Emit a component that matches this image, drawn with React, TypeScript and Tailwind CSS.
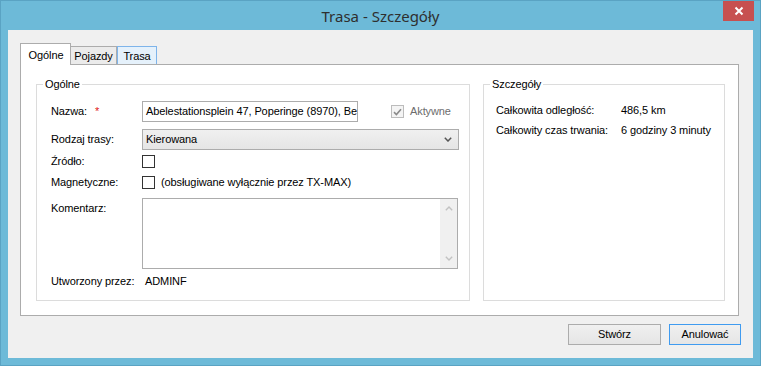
import React from "react";

const body = { fontFamily: '"Liberation Sans", Arial, sans-serif' };

function Check({ checked, disabled }: { checked?: boolean; disabled?: boolean }) {
  return (
    <div
      className={
        "w-[13px] h-[13px] border flex items-center justify-center " +
        (disabled ? "border-[#bcbcbc] bg-[#f4f4f4]" : "border-[#333333] bg-white")
      }
    >
      {checked && (
        <svg width="9" height="8" viewBox="0 0 9 8">
          <path d="M1 4.2 L3.4 6.5 L8 1.2" fill="none" stroke="#8a8a8a" strokeWidth="1.6" />
        </svg>
      )}
    </div>
  );
}

export default function App() {
  return (
    <div
      className="w-[761px] h-[366px] bg-[#6dbad8] border border-[#5aa3c3] flex flex-col text-[11px] text-black tracking-[-0.1px]"
      style={body}
    >
      {/* title bar */}
      <div className="relative h-[29px] flex items-center justify-center">
        <span
          className="text-[15px] text-[#2f2f2f] leading-none mt-[1px] tracking-normal"
          style={{ fontFamily: '"Noto Sans", "Open Sans", sans-serif' }}
        >
          Trasa - Szczegóły
        </span>
        <div className="absolute right-[6px] top-0 w-[31px] h-[20px] bg-[#c75050] flex items-center justify-center">
          <svg width="10" height="10" viewBox="0 0 10 10">
            <path d="M1.5 1.5 L8.5 8.5 M8.5 1.5 L1.5 8.5" stroke="white" strokeWidth="2" />
          </svg>
        </div>
      </div>

      {/* client area */}
      <div className="mx-[7px] h-[328px] bg-[#f0f0f0] flex flex-col pl-[12px] pr-[14px] pt-[13px]">
        {/* tabs */}
        <div className="flex items-end h-[21px]">
          <div className="relative z-10 w-[51px] h-[22px] -mb-px bg-white border border-b-0 border-[#acacac] flex items-start justify-center pt-[3px] pl-[1px]">
            Ogólne
          </div>
          <div className="w-[46px] h-[18px] bg-[#ebebeb] border border-l-0 border-b-0 border-[#acacac] flex items-center justify-center pt-[1px]">
            Pojazdy
          </div>
          <div className="w-[40px] h-[18px] bg-[#e5f1fb] border border-b-0 border-[#7eb4ea] flex items-center justify-center pt-[1px]">
            Trasa
          </div>
        </div>

        {/* panel */}
        <div className="h-[252px] bg-white border border-[#acacac] flex pl-[15px] pt-[19px] gap-[13px]">
          {/* Ogólne group */}
          <div className="relative w-[434px] h-[217px] border border-[#dcdcdc] flex flex-col pl-[14px] pt-[16px]">
            <span className="absolute left-[6px] top-[-7px] px-[2px] bg-white leading-[13px] text-[11px]">
              Ogólne
            </span>

            <div className="flex items-center h-[21px]">
              <div className="w-[91px] flex items-center">
                <span>Nazwa:</span>
                <span className="ml-[8px] text-[#e02020]">*</span>
              </div>
              <div className="w-[216px] h-[21px] border border-[#acacac] bg-white flex items-center pl-[3px] overflow-hidden whitespace-nowrap">
                Abelestationsplein 47, Poperinge (8970), Belgia
              </div>
              <div className="ml-[33px] flex items-center">
                <Check checked disabled />
                <span className="ml-[6px] text-[#6d6d6d]">Aktywne</span>
              </div>
            </div>

            <div className="mt-[7px] flex items-center h-[21px]">
              <div className="w-[91px]">Rodzaj trasy:</div>
              <div className="w-[317px] h-[21px] border border-[#acacac] bg-gradient-to-b from-[#f0f0f0] to-[#e5e5e5] flex items-center pl-[3px] pr-[6px] justify-between">
                <span>Kierowana</span>
                <svg width="8" height="5" viewBox="0 0 8 5">
                  <path d="M0.8 0.8 L4 4 L7.2 0.8" fill="none" stroke="#555555" strokeWidth="1.5" />
                </svg>
              </div>
            </div>

            <div className="mt-[5px] flex items-center h-[13px]">
              <div className="w-[91px]">Źródło:</div>
              <Check />
            </div>

            <div className="mt-[8px] flex items-center h-[13px]">
              <div className="w-[91px]">Magnetyczne:</div>
              <Check />
              <span className="ml-[6px]">(obsługiwane wyłącznie przez TX-MAX)</span>
            </div>

            <div className="mt-[9px] flex h-[71px]">
              <div className="w-[91px] pt-[2px]">Komentarz:</div>
              <div className="w-[316px] h-[71px] border border-[#acacac] bg-white flex justify-end">
                <div className="w-[17px] h-full bg-[#f0f0f0] flex flex-col items-center justify-between py-[7px]">
                  <svg width="8" height="5" viewBox="0 0 8 5">
                    <path d="M0.8 4.2 L4 1 L7.2 4.2" fill="none" stroke="#c2c2c2" strokeWidth="1.4" />
                  </svg>
                  <svg width="8" height="5" viewBox="0 0 8 5">
                    <path d="M0.8 0.8 L4 4 L7.2 0.8" fill="none" stroke="#c2c2c2" strokeWidth="1.4" />
                  </svg>
                </div>
              </div>
            </div>

            <div className="mt-[6px] flex items-center h-[13px]">
              <div className="w-[94px]">Utworzony przez:</div>
              <span>ADMINF</span>
            </div>
          </div>

          {/* Szczegóły group */}
          <div className="relative w-[242px] h-[217px] border border-[#dcdcdc] flex flex-col pl-[12px] pt-[19px]">
            <span className="absolute left-[6px] top-[-7px] px-[2px] bg-white leading-[13px] text-[11px]">
              Szczegóły
            </span>
            <div className="flex items-center h-[13px]">
              <div className="w-[125px]">Całkowita odległość:</div>
              <span>486,5 km</span>
            </div>
            <div className="mt-[7px] flex items-center h-[13px]">
              <div className="w-[125px]">Całkowity czas trwania:</div>
              <span>6 godziny 3 minuty</span>
            </div>
          </div>
        </div>

        {/* buttons */}
        <div className="mt-[8px] flex justify-end gap-[8px] -mr-[2px]">
          <div className="w-[93px] h-[21px] border border-[#acacac] bg-gradient-to-b from-[#f0f0f0] to-[#e5e5e5] flex items-center justify-center">
            Stwórz
          </div>
          <div className="w-[72px] h-[21px] border border-[#3f9bf0] bg-gradient-to-b from-[#f0f0f0] to-[#e5e5e5] flex items-center justify-center">
            Anulować
          </div>
        </div>
      </div>
    </div>
  );
}
